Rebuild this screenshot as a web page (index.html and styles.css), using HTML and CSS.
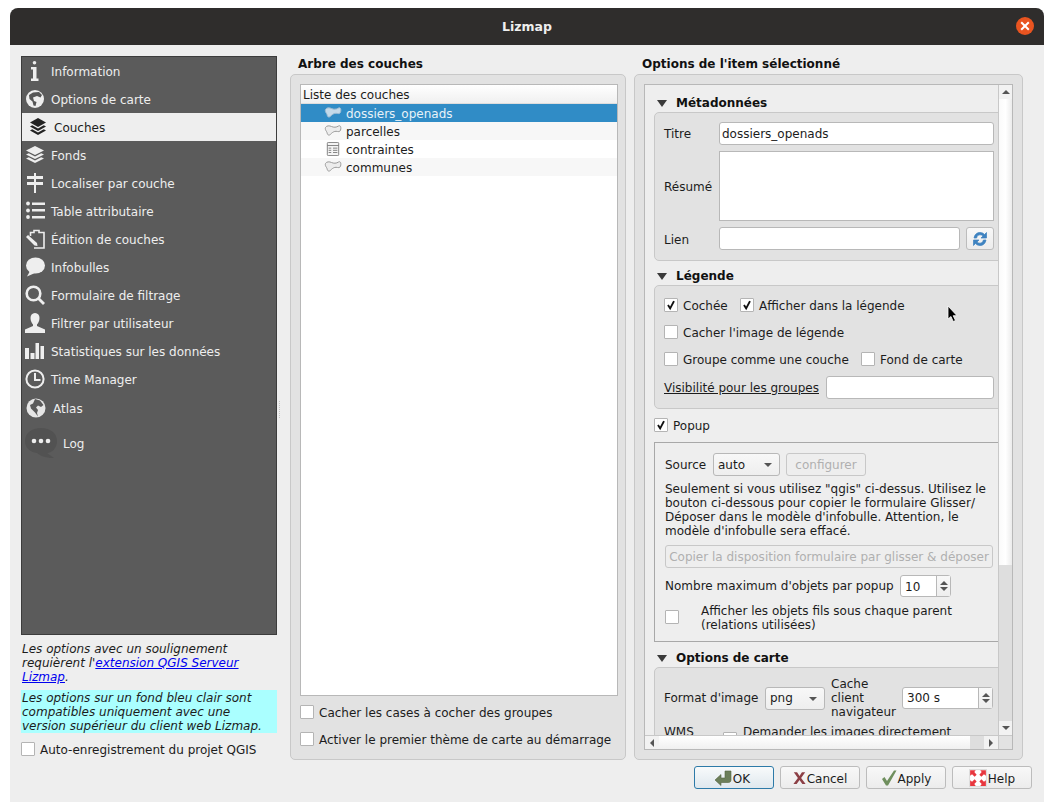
FILE: index.html
```html
<!DOCTYPE html>
<html lang="fr">
<head>
  <meta charset="UTF-8">
  <title>Lizmap</title>
  <link rel="stylesheet" href="styles.css">
</head>
<body>
  <div class="window">
    <!-- title bar -->
    <div class="titlebar">
      <span class="title">Lizmap</span>
      <span class="close">
        <svg viewBox="0 0 18 18" width="18" height="18"><path d="M5.2 5.2 12.8 12.8M12.8 5.2 5.2 12.8" stroke="#fff" stroke-width="2" fill="none"/></svg>
      </span>
    </div>

    <div class="content">
      <!-- left column -->
      <div class="col-left">
        <div class="nav">
          <div class="nav-item">
            <svg class="ico" viewBox="0 0 20 20"><circle cx="9.5" cy="1.8" r="1.8" fill="#eee"/><path d="M6 6H11.5V17.5H13.5V20H6V17.5H8V8.5H6Z" fill="#eee"/></svg>
            <span>Information</span>
          </div>
          <div class="nav-item">
            <svg class="ico" viewBox="0 0 20 20"><circle cx="10" cy="10" r="9" fill="#eee"/><path d="M4 6 8 3.5 14 3 17 6 15.5 8.5 12 7 8 8.5 9 12 11.5 13 10.5 17 8.5 16.5 7.5 12.5 4.5 10Z" fill="#555"/></svg>
            <span>Options de carte</span>
          </div>
          <div class="nav-item nav-active">
            <svg class="ico" viewBox="0 0 20 20"><path d="M10 1 18 5.5 10 10 2 5.5Z" fill="#222"/><path d="M4.2 8.2 2 9.5 10 14 18 9.5 15.8 8.2 10 11.5Z" fill="#222"/><path d="M4.2 12.2 2 13.5 10 18 18 13.5 15.8 12.2 10 15.5Z" fill="#222"/></svg>
            <span>Couches</span>
          </div>
          <div class="nav-item">
            <svg class="ico" viewBox="0 0 20 20"><path d="M10 1 19 5.5 10 10 1 5.5Z" fill="#eee"/><path d="M3.8 8.2 1 9.5 10 14 19 9.5 16.2 8.2 10 11.5Z" fill="#eee"/><path d="M3.8 12.2 1 13.5 10 18 19 13.5 16.2 12.2 10 15.5Z" fill="#eee"/></svg>
            <span>Fonds</span>
          </div>
          <div class="nav-item">
            <svg class="ico" viewBox="0 0 20 20"><path d="M9 0H11V3H18V6H11V9H18V12H11V20H9V12H2V9H9V6H2V3H9Z" fill="#eee"/></svg>
            <span>Localiser par couche</span>
          </div>
          <div class="nav-item">
            <svg class="ico" viewBox="0 0 20 20"><circle cx="3" cy="2.5" r="1.9" fill="#eee"/><circle cx="3" cy="9.5" r="1.9" fill="#eee"/><circle cx="3" cy="16" r="1.9" fill="#eee"/><path d="M7 1.5H20V4H7ZM7 8H20V10.5H7ZM7 15H20V17.5H7Z" fill="#eee"/></svg>
            <span>Table attributaire</span>
          </div>
          <div class="nav-item">
            <svg class="ico" viewBox="0 0 20 20"><path d="M5.5 7V3.5H9V1.5H14V3.5H19V19H9" fill="none" stroke="#eee" stroke-width="1.6"/><path d="M1 8 3 6 12 14 12.5 17 9.5 16.5Z" fill="#eee"/></svg>
            <span>Édition de couches</span>
          </div>
          <div class="nav-item">
            <svg class="ico" viewBox="0 0 20 20"><ellipse cx="10.5" cy="8.5" rx="9.5" ry="8" fill="#eee"/><path d="M5 14 2 19.5 10 16Z" fill="#eee"/></svg>
            <span>Infobulles</span>
          </div>
          <div class="nav-item">
            <svg class="ico" viewBox="0 0 20 20"><circle cx="8.5" cy="8.5" r="6.8" fill="none" stroke="#eee" stroke-width="2.6"/><path d="M13.5 13.5 19 19" stroke="#eee" stroke-width="2.8" fill="none"/></svg>
            <span>Formulaire de filtrage</span>
          </div>
          <div class="nav-item">
            <svg class="ico" viewBox="0 0 20 20"><path d="M10 0C13 0 14.5 2.2 14.5 5 14.5 8 13 10.5 12 11.5V13L20 16.5V20H0V16.5L8 13V11.5C7 10.5 5.5 8 5.5 5 5.5 2.2 7 0 10 0Z" fill="#eee"/></svg>
            <span>Filtrer par utilisateur</span>
          </div>
          <div class="nav-item">
            <svg class="ico" viewBox="0 0 20 20"><path d="M0 7H4V18H0ZM5.5 12H9.5V18H5.5ZM10.5 2H14V18H10.5ZM15.5 5H19V18H15.5Z" fill="#eee"/></svg>
            <span>Statistiques sur les données</span>
          </div>
          <div class="nav-item">
            <svg class="ico" viewBox="0 0 20 20"><circle cx="10" cy="10" r="8.6" fill="none" stroke="#eee" stroke-width="2"/><path d="M10 4V11H15.5" fill="none" stroke="#eee" stroke-width="2"/></svg>
            <span>Time Manager</span>
          </div>
          <div class="nav-item nav-atlas">
            <svg class="ico" viewBox="0 0 20 20"><circle cx="10" cy="10" r="9.5" fill="#e6e6e6"/><path d="M9 1 14 2.5 17.5 7 15 9 12 7.5 10 9.5 12 12 11 15 12 18.5 9 14.5 5 10.5 4 7 7 5.5Z" fill="#5b5b5b"/></svg>
            <span>Atlas</span>
          </div>
          <div class="nav-item nav-log">
            <svg class="ico-log" viewBox="0 0 32 30"><path d="M16 0C25 0 32 5 32 13 32 20 27 25 22 25L29 30C22 30 15 28 12 25 5 24 0 20 0 13 0 5 7 0 16 0Z" fill="#525252"/><circle cx="9" cy="13" r="2.3" fill="#eee"/><circle cx="16" cy="13" r="2.3" fill="#eee"/><circle cx="23" cy="13" r="2.3" fill="#eee"/></svg>
            <span>Log</span>
          </div>
        </div>
        <p class="note">Les options avec un soulignement requièrent l'<a href="#">extension QGIS Serveur Lizmap</a>.</p>
        <p class="note note-blue">Les options sur un fond bleu clair sont compatibles uniquement avec une version supérieur du client web Lizmap.</p>
        <label class="check-row auto-save"><span class="check"></span>Auto-enregistrement du projet QGIS</label>
      </div>

      <div class="splitter"></div>

      <!-- layer tree -->
      <div class="col-tree">
        <h2 class="col-title">Arbre des couches</h2>
        <div class="panel">
          <div class="tree">
            <div class="tree-head">Liste des couches</div>
            <div class="tree-row tree-selected">
              <svg class="layer-ico" viewBox="0 0 18 14"><path d="M1.5 3.5C2.5 1.5 5.5 1.5 7.5 2.5S12.5 3.5 14.5 2C16.5 1 17 3 16.8 5S15.5 8 13.5 7.5 10 7.5 8.5 8.5 6 11.5 4.5 11 3.5 9 2.5 7.5 1 5 1.5 3.5Z" fill="#c3d9e9" stroke="#9dbbd2"/></svg>
              <span>dossiers_openads</span>
            </div>
            <div class="tree-row tree-alt">
              <svg class="layer-ico" viewBox="0 0 18 14"><path d="M1.5 3.5C2.5 1.5 5.5 1.5 7.5 2.5S12.5 3.5 14.5 2C16.5 1 17 3 16.8 5S15.5 8 13.5 7.5 10 7.5 8.5 8.5 6 11.5 4.5 11 3.5 9 2.5 7.5 1 5 1.5 3.5Z" fill="#ececec" stroke="#9a9a9a"/></svg>
              <span>parcelles</span>
            </div>
            <div class="tree-row">
              <svg class="layer-ico" viewBox="0 0 18 16"><rect x="2.5" y="0.5" width="13" height="15" rx="1" fill="#f4f4f4" stroke="#777"/><path d="M2.5 4H15.5M4 7H7M9 7H14M4 9.5H7M9 9.5H14M4 12H7M9 12H14" stroke="#777" fill="none"/></svg>
              <span>contraintes</span>
            </div>
            <div class="tree-row tree-alt">
              <svg class="layer-ico" viewBox="0 0 18 14"><path d="M1.5 3.5C2.5 1.5 5.5 1.5 7.5 2.5S12.5 3.5 14.5 2C16.5 1 17 3 16.8 5S15.5 8 13.5 7.5 10 7.5 8.5 8.5 6 11.5 4.5 11 3.5 9 2.5 7.5 1 5 1.5 3.5Z" fill="#ececec" stroke="#9a9a9a"/></svg>
              <span>communes</span>
            </div>
          </div>
          <label class="check-row tree-opt"><span class="check"></span>Cacher les cases à cocher des groupes</label>
          <label class="check-row tree-opt"><span class="check"></span>Activer le premier thème de carte au démarrage</label>
        </div>
      </div>

      <!-- options -->
      <div class="col-options">
        <h2 class="col-title">Options de l'item sélectionné</h2>
        <div class="panel">
          <div class="scroll">
            <div class="viewport">
              <div class="sheet">
                <div class="sec-head"><span class="arrow"></span>Métadonnées</div>
                <div class="box box-meta">
                  <div class="form-row"><span class="form-label">Titre</span><div class="field field-title">dossiers_openads</div></div>
                  <div class="form-row form-tall"><span class="form-label form-label-low">Résumé</span><div class="field field-area"></div></div>
                  <div class="form-row">
                    <span class="form-label form-label-low">Lien</span>
                    <div class="field field-link"></div>
                    <div class="btn btn-refresh">
                      <svg viewBox="0 0 16 16" width="16" height="16"><path d="M2 7C2.5 3.5 5 1.5 8 1.5 10 1.5 11.5 2.3 12.5 3.5L14.5 1.5V7H9L11 5C10.2 4.2 9.2 3.8 8 3.8 6.3 3.8 5 5 4.6 7Z" fill="#3f83c0" stroke="#3f83c0" stroke-width=".7"/><path d="M14 9C13.5 12.5 11 14.5 8 14.5 6 14.5 4.5 13.7 3.5 12.5L1.5 14.5V9H7L5 11C5.8 11.8 6.8 12.2 8 12.2 9.7 12.2 11 11 11.4 9Z" fill="#3f83c0" stroke="#3f83c0" stroke-width=".7"/></svg>
                    </div>
                  </div>
                </div>

                <div class="sec-head sec-next"><span class="arrow"></span>Légende</div>
                <div class="box box-legend">
                  <div class="check-line">
                    <label class="check-row first-opt"><span class="check is-on"><svg viewBox="0 0 14 14"><path d="M3.5 7 6 11 10.5 2.5" fill="none" stroke="#111" stroke-width="2.2"/></svg></span>Cochée</label>
                    <label class="check-row"><span class="check is-on"><svg viewBox="0 0 14 14"><path d="M3.5 7 6 11 10.5 2.5" fill="none" stroke="#111" stroke-width="2.2"/></svg></span>Afficher dans la légende</label>
                  </div>
                  <div class="check-line">
                    <label class="check-row"><span class="check"></span>Cacher l'image de légende</label>
                  </div>
                  <div class="check-line">
                    <label class="check-row group-opt"><span class="check"></span>Groupe comme une couche</label>
                    <label class="check-row"><span class="check"></span>Fond de carte</label>
                  </div>
                  <div class="form-row visibility">
                    <span class="underlined">Visibilité pour les groupes</span>
                    <div class="field field-groups"></div>
                  </div>
                </div>

                <label class="check-row popup-check"><span class="check is-on"><svg viewBox="0 0 14 14"><path d="M3.5 7 6 11 10.5 2.5" fill="none" stroke="#111" stroke-width="2.2"/></svg></span>Popup</label>
                <div class="box box-popup">
                  <div class="form-row">
                    <span class="source-label">Source</span>
                    <div class="combo combo-source">auto<span class="combo-arrow"></span></div>
                    <div class="btn btn-disabled btn-config">configurer</div>
                  </div>
                  <p class="help-text">Seulement si vous utilisez "qgis" ci-dessus. Utilisez le bouton ci-dessous pour copier le formulaire Glisser/ Déposer dans le modèle d'infobulle. Attention, le modèle d'infobulle sera effacé.</p>
                  <div class="btn btn-disabled btn-copy">Copier la disposition formulaire par glisser &amp; déposer</div>
                  <div class="form-row max-row">
                    <span class="max-label">Nombre maximum d'objets par popup</span>
                    <div class="spin spin-max"><span class="spin-value">10</span><span class="spin-arrows"><i class="up"></i><i class="down"></i></span></div>
                  </div>
                  <div class="child-row">
                    <span class="check"></span>
                    <span class="child-label">Afficher les objets fils sous chaque parent (relations utilisées)</span>
                  </div>
                </div>

                <div class="sec-head sec-map"><span class="arrow"></span>Options de carte</div>
                <div class="box box-map">
                  <div class="form-row">
                    <span class="format-label">Format d'image</span>
                    <div class="combo combo-format">png<span class="combo-arrow"></span></div>
                    <span class="cache-label">Cache client navigateur</span>
                    <div class="spin spin-cache"><span class="spin-value">300 s</span><span class="spin-arrows"><i class="up"></i><i class="down"></i></span></div>
                  </div>
                  <div class="wms-row">
                    <span class="wms-label">WMS</span>
                    <span class="check"></span>
                    <span>Demander les images directement</span>
                  </div>
                </div>
              </div>
            </div>

            <div class="vbar">
              <span class="bar-btn"><i class="up"></i></span>
              <span class="vthumb"></span>
              <span class="bar-track"></span>
              <span class="bar-btn"><i class="down"></i></span>
            </div>
            <div class="hbar">
              <span class="bar-btn"><i class="left"></i></span>
              <span class="hthumb"></span>
              <span class="bar-track"></span>
              <span class="bar-btn"><i class="right"></i></span>
            </div>
            <div class="corner"></div>
          </div>
        </div>
      </div>
    </div>

    <!-- dialog buttons -->
    <div class="footer">
      <div class="btn dlg-btn dlg-default">
        <svg viewBox="0 0 18 16" width="18" height="16"><path d="M1 10 7 4.5V8H11V1H17V10C17 11.5 16 12.5 14.5 12.5H7V15.5Z" fill="#6c7f5a" stroke="#55653f" stroke-width=".6"/></svg>OK
      </div>
      <div class="btn dlg-btn">
        <svg viewBox="0 0 16 16" width="13" height="16"><path d="M1 1H5L8 5.5 11 1H15L10 8 15.5 15.5H11.5L8 10.5 4.5 15.5H.5L6 8Z" fill="#8c3f45"/></svg>Cancel
      </div>
      <div class="btn dlg-btn">
        <svg viewBox="0 0 16 16" width="16" height="16"><path d="M1 9 3.5 7 6 11 13 .5H15.5L7 15.5H5Z" fill="#6f8f5e"/></svg>Apply
      </div>
      <div class="btn dlg-btn">
        <svg viewBox="0 0 16 16" width="18" height="18"><rect x=".5" y=".5" width="15" height="15" fill="#fff" stroke="#ddd"/><path d="M1 1 6 1 4.7 2.7 6.8 5 5 6.8 2.7 4.7 1 6ZM15 1 10 1 11.3 2.7 9.2 5 11 6.8 13.3 4.7 15 6ZM1 15 6 15 4.7 13.3 6.8 11 5 9.2 2.7 11.3 1 10ZM15 15 10 15 11.3 13.3 9.2 11 11 9.2 13.3 11.3 15 10Z" fill="#e8373f"/></svg>Help
      </div>
    </div>
  </div>

  <!-- mouse pointer in the shot -->
  <svg class="pointer" viewBox="0 0 12 18" width="12" height="18"><path d="M1 1V14L4 11.5 6.2 16.5 8.5 15.5 6.2 10.7H10Z" fill="#000" stroke="#fff" stroke-width=".8"/></svg>
</body>
</html>
```

FILE: styles.css
```css
* {
  box-sizing: border-box;
}

body {
  margin: 0;
  background-color: #fff;
  color: #1c1c1c;
  font-family: "DejaVu Sans", sans-serif;
  font-size: 12px;
  line-height: 14px;
  overflow: hidden;
  height: 811px;
  position: relative;
}

.window {
  margin: 8px 0 0 10px;
  width: 1034px;
  height: 794px;
  background-color: #eeeeee;
  border-radius: 8px 8px 0 0;
  display: flex;
  flex-direction: column;
}

.titlebar {
  height: 37px;
  flex: none;
  background-color: #2f2d2c;
  border-radius: 8px 8px 0 0;
  position: relative;
  display: flex;
  justify-content: center;
  align-items: center;
}

.title {
  color: #eeeeee;
  font-weight: bold;
  font-size: 12.5px;
}

.close {
  position: absolute;
  right: 10px;
  top: 9px;
  width: 18px;
  height: 18px;
  border-radius: 50%;
  background-color: #e95420;
}

.close svg {
  display: block;
}

.content {
  display: flex;
  padding: 11px 0 0 11px;
  flex: none;
}

/* left column */
.col-left {
  width: 256px;
  flex: none;
}

.nav {
  height: 579px;
  background-color: #5b5b5b;
  border: 1px solid #3c3c3c;
}

.nav-item {
  height: 28px;
  padding: 2px 0 0 3px;
  display: flex;
  align-items: center;
  gap: 6px;
  color: #eeeeee;
}

.ico {
  width: 20px;
  height: 20px;
  margin-top: -2px;
  flex: none;
}

.ico-log {
  width: 32px;
  height: 30px;
  margin-top: -2px;
  flex: none;
}

.nav-active {
  background-color: #eeeeee;
  color: #1c1c1c;
  padding-left: 6px;
}

.nav-atlas {
  height: 30px;
  padding-left: 4px;
  gap: 7px;
}

.nav-log {
  height: 40px;
}

.note {
  margin: 7px 0 0;
  padding-left: 1px;
  font-style: italic;
}

.note a {
  color: #0000ee;
}

.note-blue {
  margin-top: 6px;
  height: 43px;
  padding: 1px 10px 0 1px;
  background-color: #aaffff;
}

.check-row {
  display: flex;
  align-items: center;
  gap: 5px;
  height: 18px;
  padding-top: 2px;
  white-space: nowrap;
}

.check {
  width: 14px;
  height: 14px;
  flex: none;
  background-color: #fff;
  border: 1px solid #b4b4b4;
  border-radius: 1px;
  display: block;
}

.check-row .check {
  margin-top: -2px;
}

.check svg {
  display: block;
  width: 12px;
  height: 12px;
}

.auto-save {
  margin-top: 7px;
}

.splitter {
  width: 1px;
  height: 17px;
  margin: 345px 10px 0 2px;
  flex: none;
  border-left: 1px dotted #c4c4c4;
}

/* center and right columns */
.col-tree {
  width: 336px;
  flex: none;
}

.col-options {
  width: 389px;
  margin-left: 8px;
  flex: none;
}

.col-title {
  margin: 0;
  height: 18px;
  padding: 1px 0 0 8px;
  font-size: 12px;
  line-height: 14px;
  font-weight: bold;
  color: #111;
}

.panel {
  height: 686px;
  background-color: #e2e2e2;
  border: 1px solid #c8c8c8;
  border-radius: 5px;
  padding: 9px;
}

.tree {
  width: 318px;
  height: 612px;
  background-color: #fff;
  border: 1px solid #b8b8b8;
  margin-bottom: 7px;
}

.tree-head {
  height: 19px;
  padding: 3px 0 0 2px;
  background: linear-gradient(#ffffff, #f0f0f0);
  border-bottom: 1px solid #dddddd;
}

.tree-row {
  height: 18px;
  padding: 2px 0 0 23px;
  display: flex;
  align-items: center;
  gap: 4px;
}

.tree-alt {
  background-color: #f7f7f7;
}

.tree-selected {
  background-color: #308cc6;
  color: #e8f2f8;
}

.layer-ico {
  width: 18px;
  height: 14px;
  margin-top: -2px;
  flex: none;
}

.tree-opt {
  margin-bottom: 9px;
}

/* scroll area */
.scroll {
  display: grid;
  grid-template-columns: 353px 14px;
  grid-template-rows: 650px 14px;
  height: 666px;
  width: 369px;
  border: 1px solid #b8b8b8;
  background-color: #eeeeee;
}

.viewport {
  overflow: hidden;
}

.sheet {
  width: 350px;
  margin-left: 9px;
  padding-top: 9px;
}

.sec-head {
  height: 18px;
  display: flex;
  align-items: center;
  gap: 9px;
  font-weight: bold;
  color: #111;
  padding-left: 3px;
}

.arrow {
  width: 0;
  height: 0;
  border-left: 5.5px solid transparent;
  border-right: 5.5px solid transparent;
  border-top: 7px solid #3a3a3a;
  flex: none;
}

.sec-next {
  margin-top: 6px;
}

.sec-map {
  margin-top: 7px;
}

.box {
  background-color: #e2e2e2;
  border: 1px solid #c8c8c8;
  border-radius: 5px 0 0 5px;
}

.box-meta {
  height: 149px;
  padding: 9px 10px 0 9px;
}

.box-legend {
  height: 124px;
  padding: 9px 10px 0 9px;
}

.box-popup {
  height: 200px;
  padding: 10px 11px 0 10px;
  background-color: #eeeeee;
  border-color: #a8a8a8;
  border-radius: 0;
}

.box-map {
  height: 90px;
  padding: 9px 10px 0 9px;
}

.form-row {
  display: flex;
  align-items: center;
  margin-bottom: 6px;
}

.form-label {
  width: 55px;
  flex: none;
}

.form-label-low {
  padding-top: 2px;
}

.field {
  height: 23px;
  background-color: #fff;
  border: 1px solid #b8b8b8;
  border-radius: 3px;
  padding: 4px 0 0 2px;
  flex: none;
}

.field-title {
  width: 275px;
}

.field-area {
  width: 275px;
  height: 70px;
  border-radius: 0;
}

.field-link {
  width: 241px;
}

.btn {
  background: linear-gradient(#f8f8f8, #ececec);
  border: 1px solid #bcbcbc;
  border-radius: 3px;
  display: flex;
  align-items: center;
  justify-content: center;
  flex: none;
}

.btn-refresh {
  width: 28px;
  height: 23px;
  margin-left: 6px;
}

.check-line {
  display: flex;
  align-items: center;
  height: 20px;
  margin-bottom: 7px;
}

.first-opt {
  width: 76px;
}

.group-opt {
  width: 197px;
}

.visibility {
  margin: 0;
}

.underlined {
  width: 162px;
  flex: none;
  text-decoration: underline;
}

.field-groups {
  width: 168px;
}

.popup-check {
  margin: 7px 0 8px;
}

.source-label {
  width: 48px;
  flex: none;
}

.combo {
  height: 23px;
  background: linear-gradient(#f8f8f8, #eeeeee);
  border: 1px solid #b8b8b8;
  border-radius: 3px;
  padding-left: 4px;
  flex: none;
  display: flex;
  align-items: center;
  position: relative;
}

.combo-arrow {
  position: absolute;
  right: 7px;
  top: 9px;
  border-left: 4px solid transparent;
  border-right: 4px solid transparent;
  border-top: 4px solid #555;
}

.combo-source {
  width: 67px;
}

.btn-disabled {
  color: #b0b0b0;
  background: #eeeeee;
  border-color: #c8c8c8;
}

.btn-config {
  width: 80px;
  height: 23px;
  margin-left: 6px;
}

.help-text {
  margin: 0 0 7px;
  height: 56px;
}

.btn-copy {
  height: 23px;
  width: 328px;
  white-space: nowrap;
}

.max-row {
  margin: 7px 0 6px;
}

.max-label {
  width: 235px;
  flex: none;
}

.spin {
  height: 22px;
  background-color: #fff;
  border: 1px solid #b8b8b8;
  border-radius: 3px;
  display: flex;
  flex: none;
}

.spin-value {
  flex: 1;
  padding: 3px 0 0 4px;
}

.spin-arrows {
  width: 14px;
  background: linear-gradient(#f8f8f8, #eeeeee);
  border-left: 1px solid #b8b8b8;
  display: flex;
  flex-direction: column;
  align-items: center;
  justify-content: center;
  gap: 2px;
}

.spin-max {
  width: 51px;
}

.spin-max .spin-value {
  padding-top: 4px;
}

.child-row {
  display: flex;
  align-items: center;
  height: 28px;
}

.child-label {
  margin-left: 22px;
  padding-top: 2px;
}

.format-label {
  width: 101px;
  flex: none;
}

.combo-format {
  width: 60px;
}

.cache-label {
  width: 66px;
  margin-left: 6px;
  flex: none;
}

.spin-cache {
  width: 91px;
  margin-left: 5px;
}

.wms-row {
  display: flex;
  align-items: flex-start;
  margin-top: 1px;
}

.wms-label {
  width: 59px;
  flex: none;
}

.wms-row .check {
  margin: 7px 6px 0 0;
}

/* scroll bars */
.vbar {
  display: flex;
  flex-direction: column;
  border-left: 1px solid #c8c8c8;
}

.hbar {
  display: flex;
  border-top: 1px solid #c8c8c8;
}

.bar-btn {
  width: 14px;
  height: 14px;
  flex: none;
  background-color: #f2f2f2;
  display: flex;
  align-items: center;
  justify-content: center;
}

.vbar .bar-btn {
  width: 13px;
}

.hbar .bar-btn {
  height: 13px;
}

.bar-track {
  background-color: #dedede;
}

.vthumb {
  height: 466px;
  background: linear-gradient(90deg, #fafafa, #ffffff 50%, #ececec);
}

.vbar .bar-track {
  flex: 1;
}

.hthumb {
  width: 311px;
  background: linear-gradient(#ffffff, #f0f0f0);
}

.hbar .bar-track {
  flex: 1;
}

.corner {
  background-color: #e2e2e2;
  border-left: 1px solid #c8c8c8;
  border-top: 1px solid #c8c8c8;
}

i.up,
i.down,
i.left,
i.right {
  display: block;
  width: 0;
  height: 0;
}

i.up {
  border-left: 4px solid transparent;
  border-right: 4px solid transparent;
  border-bottom: 4px solid #555;
}

i.down {
  border-left: 4px solid transparent;
  border-right: 4px solid transparent;
  border-top: 4px solid #555;
}

i.left {
  border-top: 4px solid transparent;
  border-bottom: 4px solid transparent;
  border-right: 4px solid #555;
}

i.right {
  border-top: 4px solid transparent;
  border-bottom: 4px solid transparent;
  border-left: 4px solid #555;
}

/* footer */
.footer {
  display: flex;
  justify-content: flex-end;
  gap: 6px;
  padding: 6px 12px 0 0;
}

.dlg-btn {
  width: 80px;
  height: 23px;
  padding-top: 2px;
  gap: 1px;
}

.dlg-btn svg {
  margin-top: -2px;
}

.dlg-default {
  padding-right: 4px;
  border-color: #2d7aa8;
  background: linear-gradient(#f8fafb, #dfe8ee);
}

.pointer {
  position: absolute;
  left: 947px;
  top: 305px;
}
```
